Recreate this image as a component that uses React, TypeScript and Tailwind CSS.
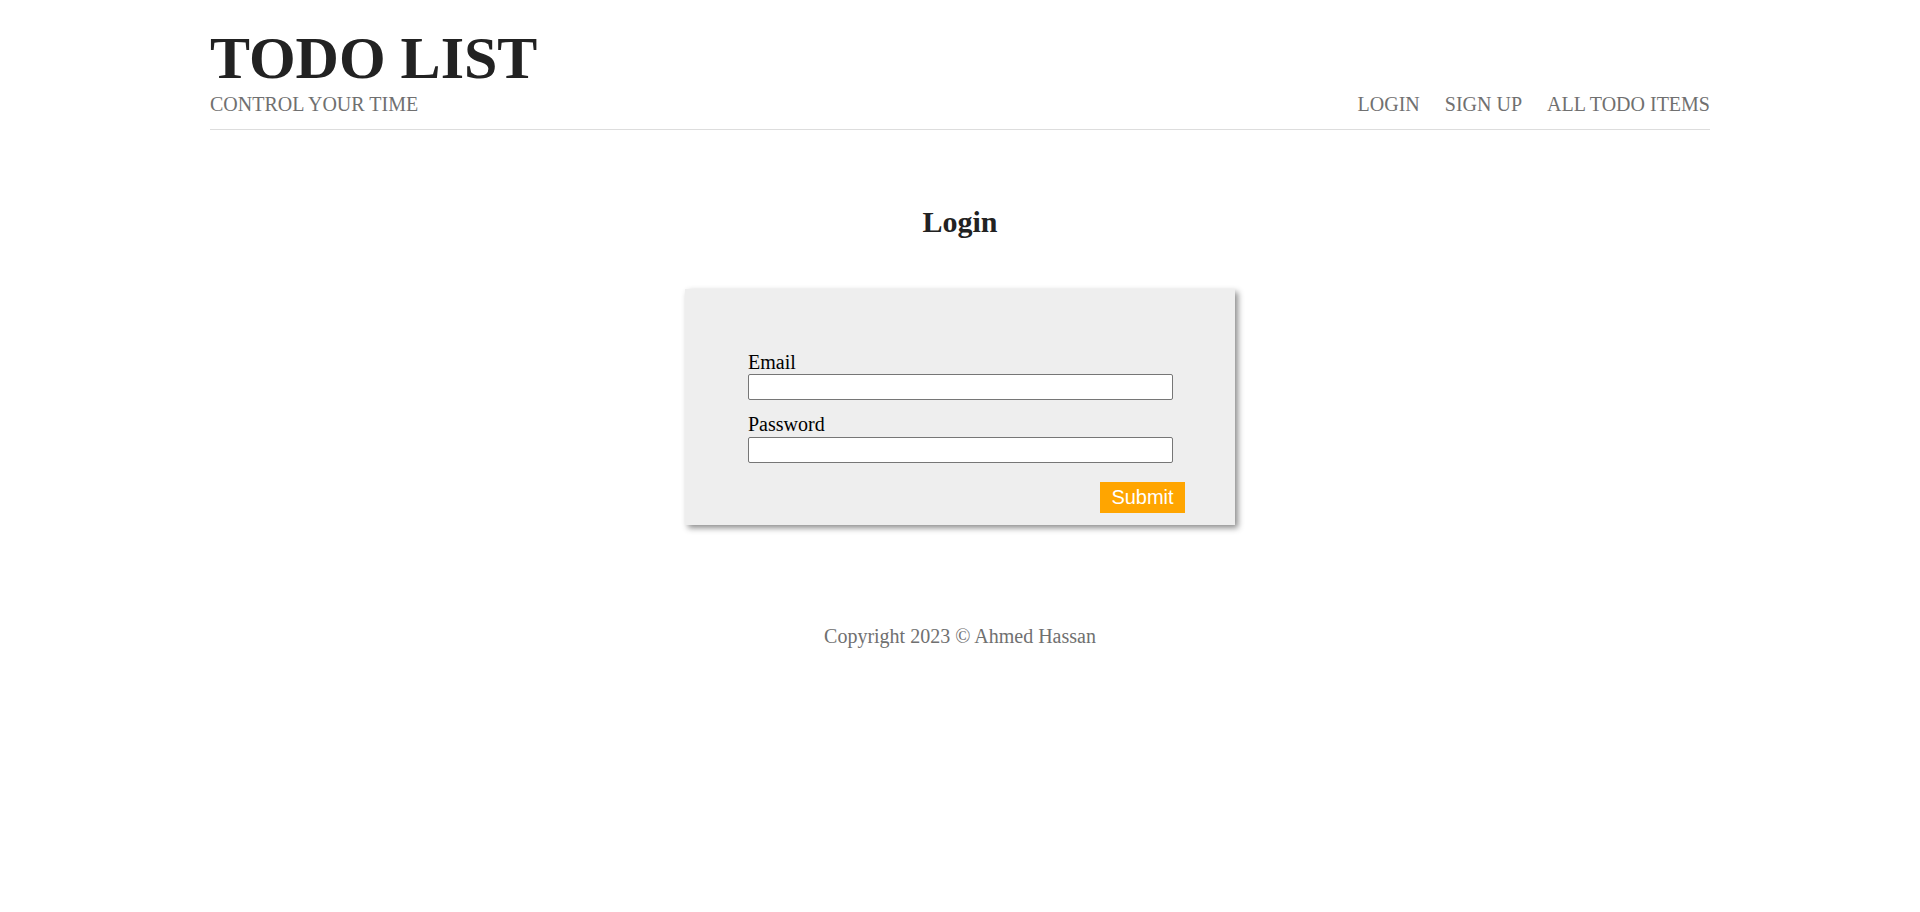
import { useState } from 'react';

const serif = "font-['Liberation_Serif','Times_New_Roman',serif]";

function Header() {
    return (
        <header className="mx-auto w-[1500px] border-b border-[#dddddd] pt-[27.5px] pb-[13px]">
            <h1 className={`${serif} text-[60px] leading-[60px] font-bold text-[#222222]`}>TODO LIST</h1>
            <div className={`${serif} mt-[5px] flex items-center justify-between text-[20px] leading-[23px] text-[#707070]`}>
                <span>CONTROL YOUR TIME</span>
                <nav className="flex gap-[25px]">
                    <a href="#">LOGIN</a>
                    <a href="#">SIGN UP</a>
                    <a href="#">ALL TODO ITEMS</a>
                </nav>
            </div>
        </header>
    );
}

export default function App() {
    const [email, setEmail] = useState('');
    const [password, setPassword] = useState('');

    return (
        <div className={`${serif} min-h-[912px] bg-white`}>
            <Header />

            <main className="flex flex-col items-center">
                <h2 className="mt-[75.5px] text-[30px] leading-[34px] font-bold text-[#222222]">Login</h2>

                {/* login card */}
                <form
                    onSubmit={(e) => e.preventDefault()}
                    className="mt-[50px] flex w-[550px] flex-col bg-[#eeeeee] pt-[61.75px] pr-[50px] pb-[12px] pl-[63px] shadow-[3px_3px_6px_rgba(0,0,0,0.45)]"
                >
                    <label className="text-[20px] leading-[23px] text-black">Email</label>
                    <input
                        type="email"
                        value={email}
                        onChange={(e) => setEmail(e.target.value)}
                        className="h-[26px] w-[425px] rounded-[2px] border border-[#767676] bg-white"
                    />
                    <label className="mt-[12.75px] text-[20px] leading-[23px] text-black">Password</label>
                    <input
                        type="password"
                        value={password}
                        onChange={(e) => setPassword(e.target.value)}
                        className="mt-[1px] h-[26px] w-[425px] rounded-[2px] border border-[#767676] bg-white"
                    />
                    <div className="mt-[19px] flex justify-end">
                        <button
                            type="submit"
                            className="h-[31px] w-[85px] bg-[#ffa500] font-['Liberation_Sans',Arial,sans-serif] text-[20px] leading-[31px] text-white"
                        >
                            Submit
                        </button>
                    </div>
                </form>

                <footer className="mt-[100.5px] text-[20px] leading-[23px] text-[#707070]">
                    Copyright 2023 © Ahmed Hassan
                </footer>
            </main>
        </div>
    );
}
